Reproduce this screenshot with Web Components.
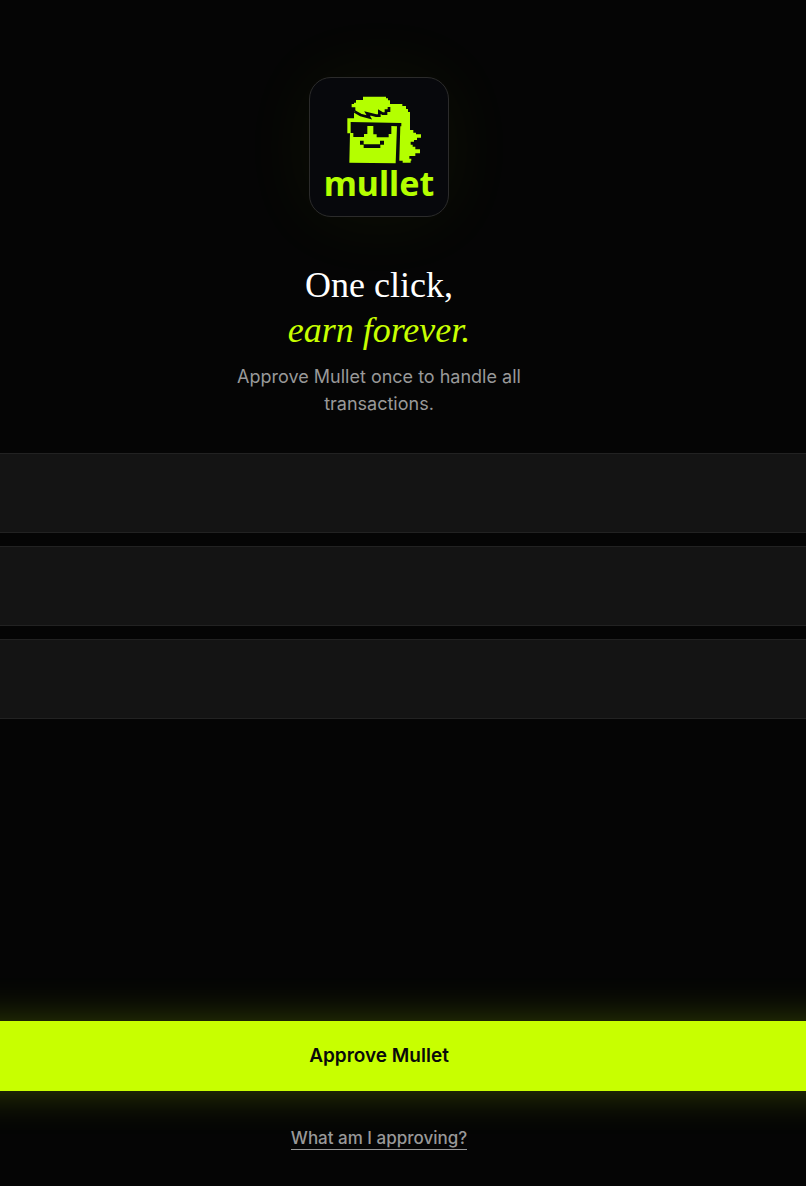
<!DOCTYPE html>
<html lang="en">
<head>
<meta charset="utf-8">
<meta name="viewport" content="width=device-width, initial-scale=1">
<title>Mullet</title>
<style>
  html {
    background: #050505;
  }

  body {
    margin: 0;
    font-family: Inter, "Liberation Sans", sans-serif;
    color: #fff;
  }
</style>
</head>
<body>
  <approve-screen>
    <mullet-logo slot="logo"></mullet-logo>
    <hero-text slot="hero">
      <span slot="title">One click,</span>
      <em slot="accent">earn forever.</em>
      <p slot="description">Approve Mullet once to handle all transactions.</p>
    </hero-text>
    <feature-card></feature-card>
    <feature-card></feature-card>
    <feature-card></feature-card>
    <approve-button slot="actions">Approve Mullet</approve-button>
    <help-link slot="actions">What am I approving?</help-link>
  </approve-screen>

<script>
function makeTemplate(html) {
  const template = document.createElement('template');
  template.innerHTML = html;
  return template;
}

const screenTemplate = makeTemplate(`
  <style>
    :host {
      --gutter: 48px;
      --lime: #c8ff00;
      --muted: #999;
      display: flex;
      flex-direction: column;
      min-height: 100vh;
      box-sizing: border-box;
      padding: 77px 0 36px;
      overflow: hidden;
    }

    header {
      display: flex;
      flex-direction: column;
      align-items: center;
      gap: 46px;
      padding-right: var(--gutter);
    }

    main {
      display: flex;
      flex-direction: column;
      gap: 13px;
      margin-top: 36px;
    }

    footer {
      display: flex;
      flex-direction: column;
      gap: 36px;
      margin-top: auto;
    }
  </style>
  <header>
    <slot name="logo"></slot>
    <slot name="hero"></slot>
  </header>
  <main><slot></slot></main>
  <footer><slot name="actions"></slot></footer>
`);

class ApproveScreen extends HTMLElement {
  constructor() {
    super();
    this.attachShadow({ mode: 'open' });
    this.shadowRoot.appendChild(screenTemplate.content.cloneNode(true));
  }
}

const logoTemplate = makeTemplate(`
  <style>
    :host {
      display: block;
      width: 138px;
      height: 138px;
      border: 1px solid #2b2b2b;
      border-radius: 22px;
      background: #07080c;
      box-shadow: 0 0 80px rgba(200, 255, 0, 0.05);
    }

    svg {
      display: block;
    }

    text {
      font: 700 34px "Noto Sans", sans-serif;
      fill: #b4ff00;
    }
  </style>
  <svg width="138" height="138" viewBox="0 0 138 138" role="img" aria-label="mullet">
    <g transform="translate(30 12) scale(0.3333)">
      <!-- hair and face -->
      <path fill="#b4ff00" d="M69 20H138V25H144V31H150V42H187V48H198V57H204V66H210V120H220V128H228V133H243V143H231V150H222V155H212V164H218V170H226V178H240V190H226V198H208V206H214V212H212V218H188V212H178V206L181 108H171L167 220L28 218L30 130H22V85H42V64H46V52H35V42H42V38H48V30H69Z"/>
      <!-- fringe -->
      <path fill="none" stroke="#07080c" stroke-width="8" d="M43 64L62 75L88 82L81 70L108 77H118V65L128 71H138V62H147V51"/>
      <!-- glasses -->
      <path fill="#07080c" d="M32 96L184 99V109H171L154 108V132H146V142H110V133H100V108H82V132H72V141H40V129H32Z"/>
      <!-- mouth -->
      <path fill="#07080c" d="M60 152H71V163H120V152H132V164H121V174H71V164H60Z"/>
    </g>
    <text x="69" y="118" text-anchor="middle">mullet</text>
  </svg>
`);

class MulletLogo extends HTMLElement {
  constructor() {
    super();
    this.attachShadow({ mode: 'open' });
    this.shadowRoot.appendChild(logoTemplate.content.cloneNode(true));
  }
}

const heroTemplate = makeTemplate(`
  <style>
    :host {
      display: block;
      max-width: 320px;
      text-align: center;
    }

    h1 {
      margin: 0;
      font: 400 36px/45px "Liberation Serif", serif;
    }

    ::slotted(span),
    ::slotted(em) {
      display: block;
    }

    ::slotted(em) {
      color: var(--lime);
    }

    ::slotted(p) {
      margin: 10px 0 0;
      font-size: 18px;
      line-height: 27px;
      color: var(--muted);
    }
  </style>
  <h1>
    <slot name="title"></slot>
    <slot name="accent"></slot>
  </h1>
  <slot name="description"></slot>
`);

class HeroText extends HTMLElement {
  constructor() {
    super();
    this.attachShadow({ mode: 'open' });
    this.shadowRoot.appendChild(heroTemplate.content.cloneNode(true));
  }
}

const cardTemplate = makeTemplate(`
  <style>
    :host {
      display: block;
      min-height: 78px;
      border: solid #222;
      border-width: 1px 0;
      background: #141414;
    }
  </style>
  <slot></slot>
`);

class FeatureCard extends HTMLElement {
  constructor() {
    super();
    this.attachShadow({ mode: 'open' });
    this.shadowRoot.appendChild(cardTemplate.content.cloneNode(true));
  }
}

const buttonTemplate = makeTemplate(`
  <style>
    /* runs past both screen edges so the glow stays even */
    :host {
      display: block;
      margin: 0 calc(-1 * var(--gutter));
    }

    button {
      display: block;
      width: 100%;
      padding: 20px calc(2 * var(--gutter)) 20px var(--gutter);
      border: none;
      background: var(--lime);
      box-shadow: 0 0 40px rgba(200, 255, 0, 0.25);
      color: #0a0a0a;
      font: 600 19px/30px Inter, sans-serif;
      cursor: pointer;
    }
  </style>
  <button type="button"><slot></slot></button>
`);

class ApproveButton extends HTMLElement {
  constructor() {
    super();
    this.attachShadow({ mode: 'open' });
    this.shadowRoot.appendChild(buttonTemplate.content.cloneNode(true));
    this.shadowRoot.querySelector('button').addEventListener('click', () => {
      this.dispatchEvent(new CustomEvent('approve', { bubbles: true, composed: true }));
    });
  }
}

const linkTemplate = makeTemplate(`
  <style>
    :host {
      display: flex;
      justify-content: center;
      padding-right: var(--gutter);
    }

    a {
      border-bottom: 1px solid var(--muted);
      color: var(--muted);
      font-size: 17px;
      font-weight: 500;
      line-height: 22px;
      text-decoration: none;
    }
  </style>
  <a href="#approving"><slot></slot></a>
`);

class HelpLink extends HTMLElement {
  constructor() {
    super();
    this.attachShadow({ mode: 'open' });
    this.shadowRoot.appendChild(linkTemplate.content.cloneNode(true));
  }
}

customElements.define('approve-screen', ApproveScreen);
customElements.define('mullet-logo', MulletLogo);
customElements.define('hero-text', HeroText);
customElements.define('feature-card', FeatureCard);
customElements.define('approve-button', ApproveButton);
customElements.define('help-link', HelpLink);
</script>
</body>
</html>
